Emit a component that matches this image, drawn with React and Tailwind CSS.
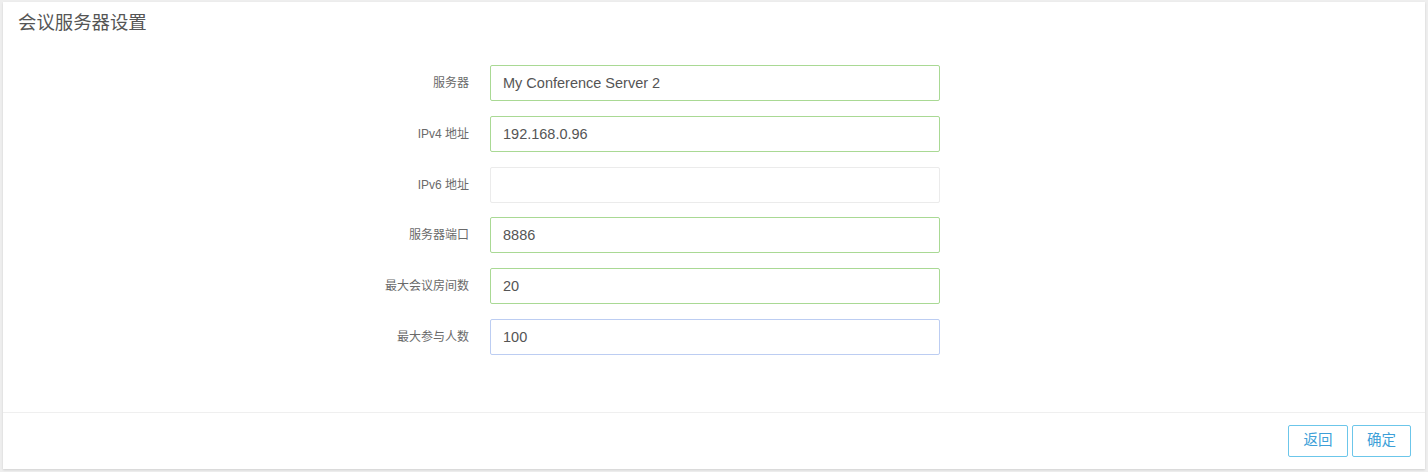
import React from 'react';

const fields = [
  { label: '服务器', value: 'My Conference Server 2', border: 'border-[#a9d994]' },
  { label: 'IPv4 地址', value: '192.168.0.96', border: 'border-[#a9d994]' },
  { label: 'IPv6 地址', value: '', border: 'border-[#ebebeb]' },
  { label: '服务器端口', value: '8886', border: 'border-[#a9d994]' },
  { label: '最大会议房间数', value: '20', border: 'border-[#a9d994]' },
  { label: '最大参与人数', value: '100', border: 'border-[#bccdf2]' },
];

export default function App() {
  return (
    <div className="h-[472px] bg-[#eeeeee] pt-[2px] pl-[3px] pr-[3px] font-['Liberation_Sans','Noto_Sans_CJK_SC',sans-serif]">
      <div className="h-[467px] bg-white shadow-[0_1px_2px_rgba(0,0,0,0.12)] flex flex-col">
        <div className="h-[63px] pt-[8px] px-[15px]">
          <h1 className="text-[18.4px] leading-[25px] text-[#555]">会议服务器设置</h1>
        </div>

        <div className="flex-1 flex flex-col gap-[14.8px]">
          {fields.map((f) => (
            <div key={f.label} className="grid grid-cols-[487px_450px] items-center">
              <label className="text-right pr-[21px] text-[12px] text-[#6a6a6a]">{f.label}</label>
              <input
                readOnly
                value={f.value}
                className={`h-[36px] w-[450px] rounded-[2px] border ${f.border} px-[12px] text-[14.5px] text-[#555] outline-none`}
              />
            </div>
          ))}
        </div>

        <div className="border-t border-[#efefef] flex justify-end gap-[4px] py-[12px] pr-[14px]">
          <button className="w-[60px] h-[32px] rounded-[2px] border border-[#6cc6ea] text-[#3d9fd8] text-[14.5px]">返回</button>
          <button className="w-[59px] h-[32px] rounded-[2px] border border-[#6cc6ea] text-[#3d9fd8] text-[14.5px]">确定</button>
        </div>
      </div>
    </div>
  );
}
